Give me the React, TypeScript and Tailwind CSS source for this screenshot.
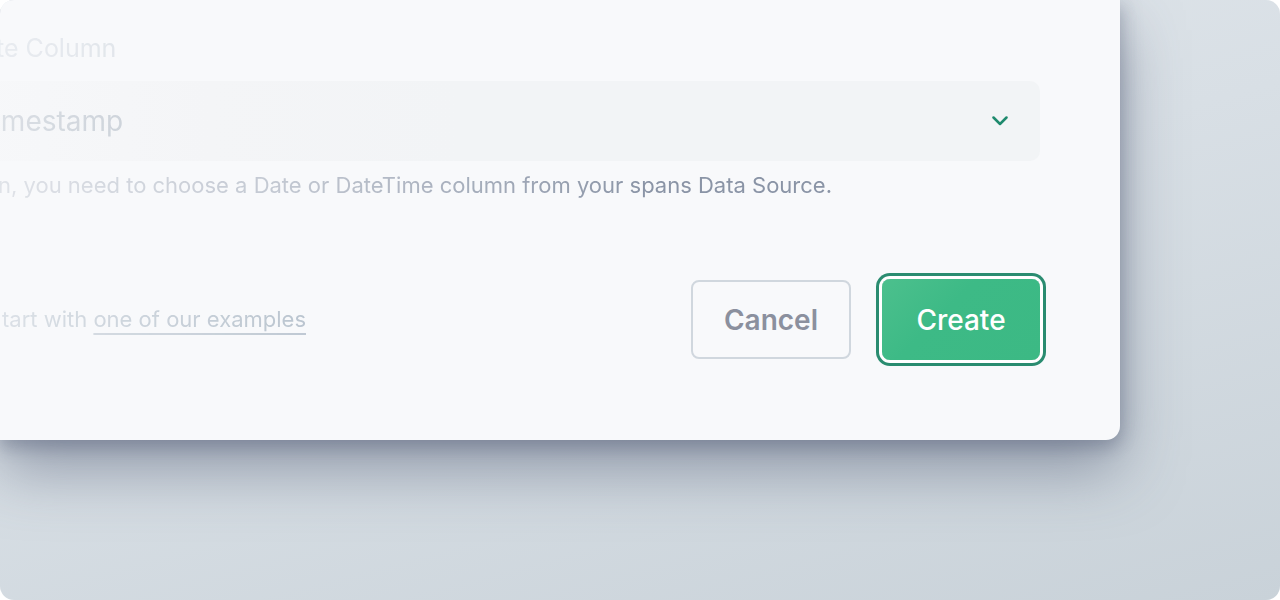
import React from "react";

export default function App() {
  return (
    <div className="w-[1280px] h-[600px] bg-white overflow-hidden" style={{ fontFamily: "Inter, 'Noto Sans', sans-serif" }}>
      <div className="relative w-full h-full rounded-[14px] overflow-hidden bg-[linear-gradient(165deg,#e3e8ed_0%,#d8dfe5_45%,#c9d2d9_100%)]">
        <div className="w-[1120px] h-[440px] bg-[#f8f9fb] rounded-br-[14px] shadow-[0_30px_60px_rgba(80,90,115,0.5),0_8px_16px_rgba(80,90,115,0.3),6px_0_20px_rgba(80,90,115,0.12)] overflow-hidden">
          <div className="pr-[80px] pt-[30px] pb-[20px]">
            <div className="ml-[-36px] text-[25px] leading-[36px] text-[#b4bfcb] [mask-image:linear-gradient(to_right,rgba(0,0,0,0.22)_36px,rgba(0,0,0,0.5)_336px,#000_686px)]">
              Date Column
            </div>
            <div className="mt-[15px] ml-[-40px] h-[80px] rounded-[10px] bg-[linear-gradient(to_right,#f7f8fa_0px,#f4f5f7_250px,#f2f4f6_500px)] flex items-center justify-between pl-[16px] pr-[32px]">
              <span className="text-[28px] text-[#9aa6b4] [mask-image:linear-gradient(to_right,rgba(0,0,0,0.3)_24px,rgba(0,0,0,0.6)_324px)]">
                Timestamp
              </span>
              <svg width="16" height="10" viewBox="0 0 16 10" fill="none">
                <path d="M1.5 1.5 L8 8 L14.5 1.5" stroke="#1f8a6e" strokeWidth="2.5" strokeLinecap="round" strokeLinejoin="round" />
              </svg>
            </div>
            <div className="mt-[9px] ml-[-2px] text-[22px] leading-[30px] text-[#8a94a6] [mask-image:linear-gradient(to_right,rgba(0,0,0,0.22)_2px,rgba(0,0,0,0.5)_302px,#000_652px)]">
              n, you need to choose a Date or DateTime column from your spans Data Source.
            </div>
            <div className="mt-[79px] flex items-center justify-between">
              <div className="ml-[2px] text-[22px] text-[#b0bcc8] [mask-image:linear-gradient(to_right,rgba(0,0,0,0.4)_0px,rgba(0,0,0,0.85)_300px)]">
                tart with{" "}
                <span className="underline decoration-[2px] underline-offset-[6px] decoration-[#b6c1cc]">one of our examples</span>
              </div>
              <div className="flex items-center gap-[31px]">
                <button className="w-[160px] h-[79px] rounded-[8px] border-2 border-[#d0d7de] text-[28px] font-semibold text-[#8b909e] bg-transparent">
                  Cancel
                </button>
                <button className="w-[158px] h-[81px] rounded-[8px] bg-[linear-gradient(135deg,#4cc08d_0%,#3dba86_40%,#3cb984_100%)] text-[28px] font-medium text-white ring-[3px] ring-[#2a8c70] ring-offset-[3px] ring-offset-white">
                  Create
                </button>
              </div>
            </div>
          </div>
        </div>
      </div>
    </div>
  );
}
